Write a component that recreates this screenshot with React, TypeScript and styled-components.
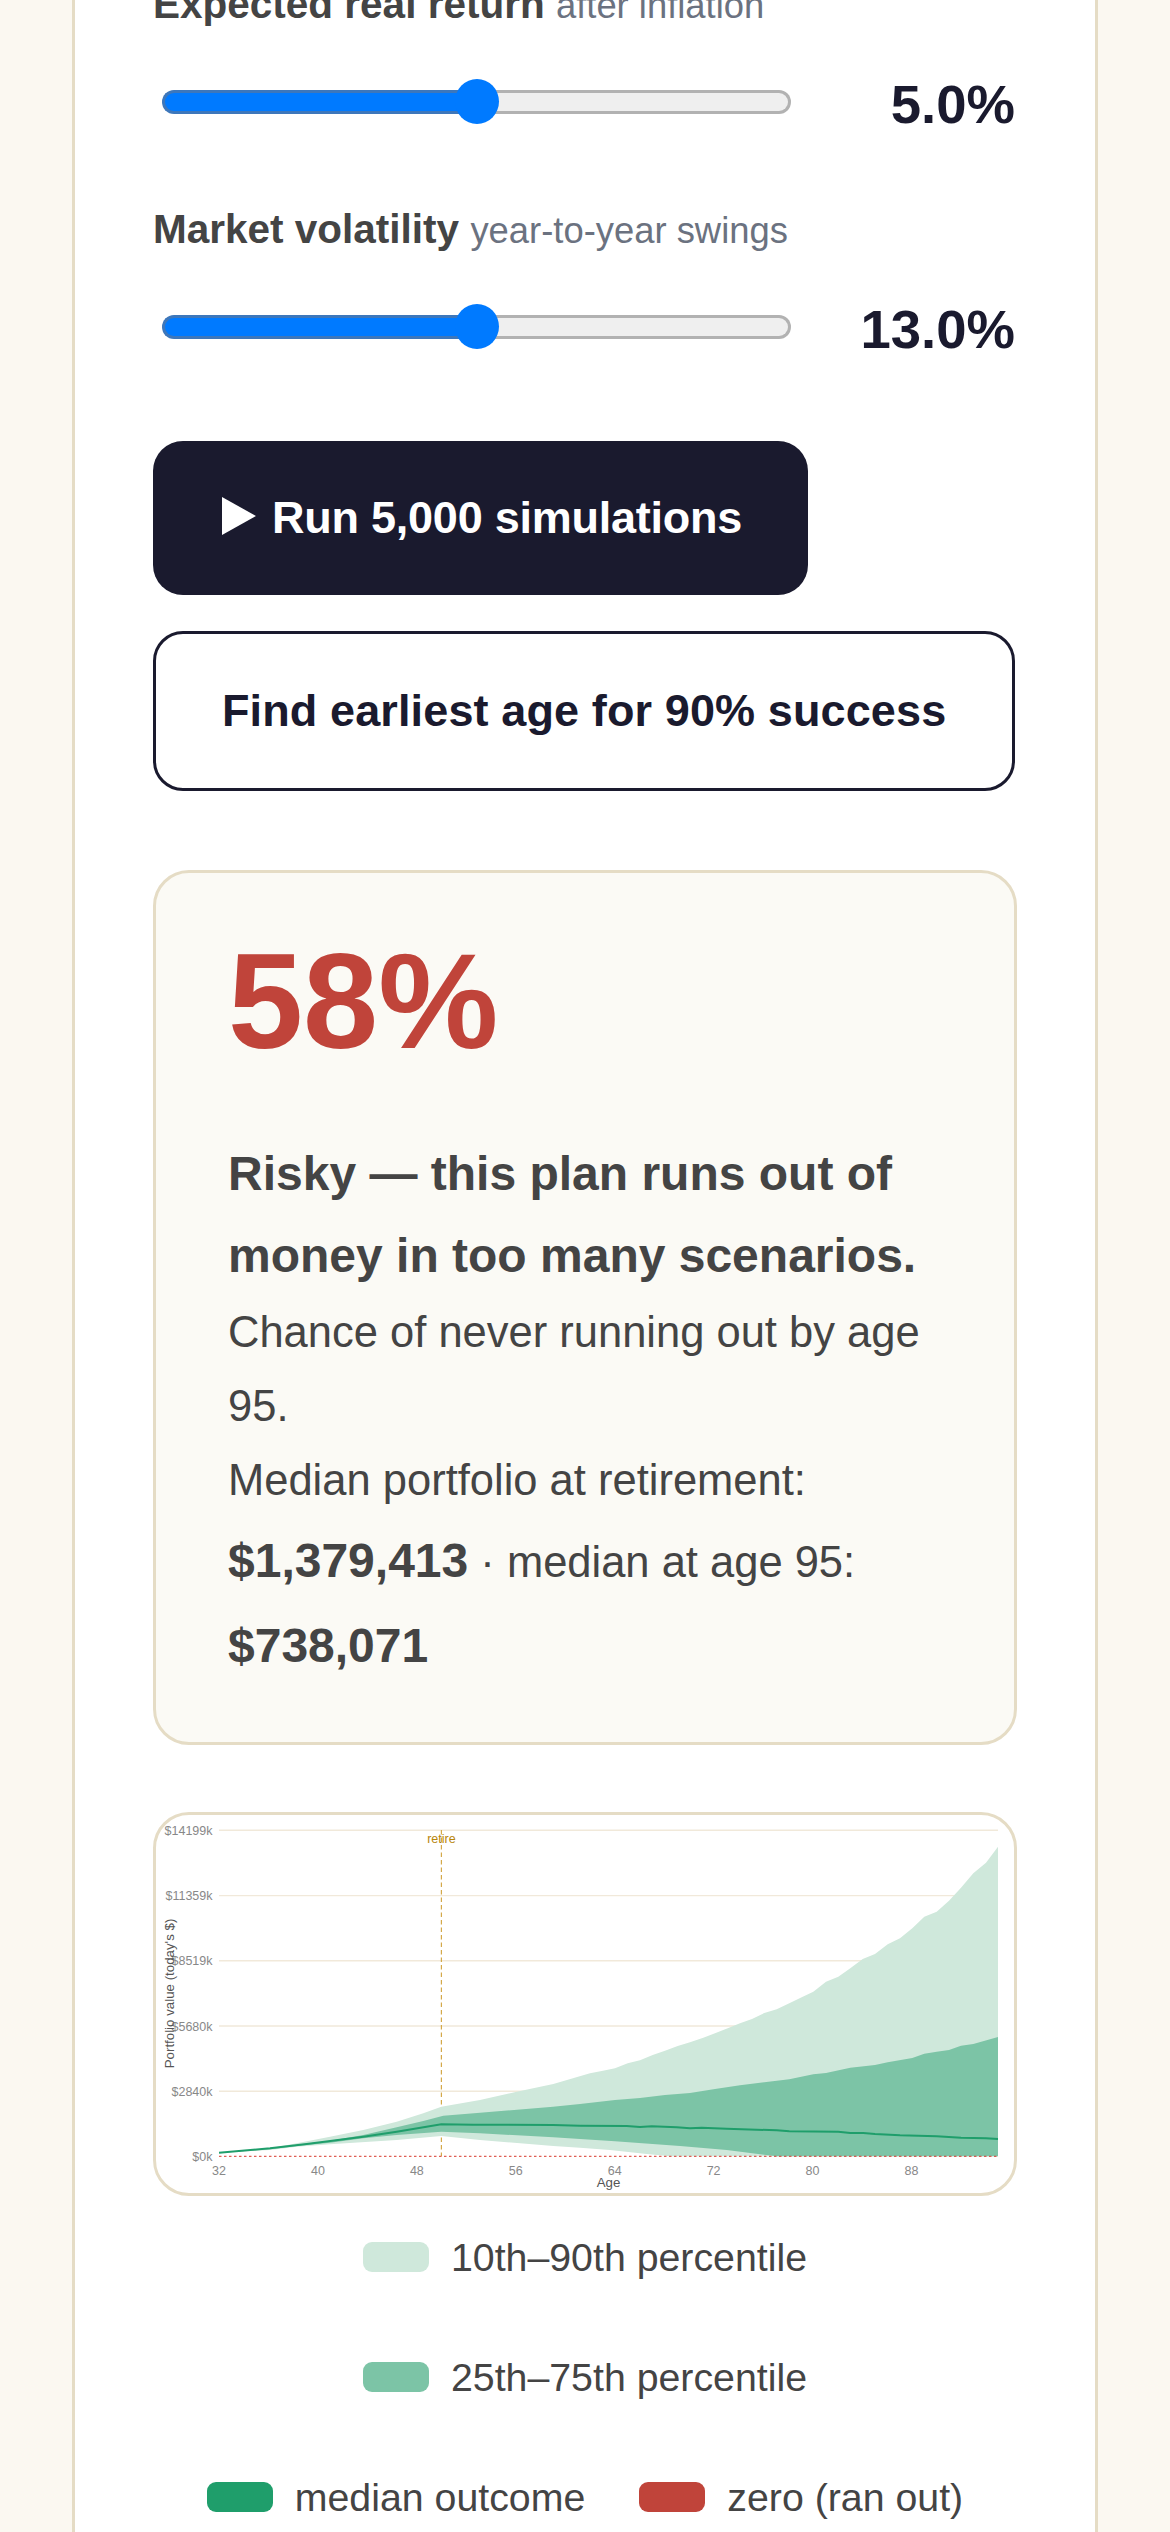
import React from "react";
import styled, { createGlobalStyle } from "styled-components";

const GlobalStyle = createGlobalStyle`
  html, body {
    margin: 0;
    padding: 0;
    height: 2532px;
    overflow: hidden;
    background: #fbf8f1;
    font-family: "Liberation Sans", Arial, sans-serif;
  }
`;

const Panel = styled.main`
  box-sizing: border-box;
  width: 1026px;
  min-height: 2700px;
  margin: -100px 0 0 72px;
  padding: 71px 78px 0;
  background: #fff;
  border: 3px solid #e5dcc5;
`;

const Field = styled.section`
  margin-bottom: 55px;
`;

const FieldLabel = styled.div`
  font-size: 40.5px;
  line-height: 60px;
  font-weight: 700;
  color: #444;
`;

const Hint = styled.span`
  font-size: 36.4px;
  line-height: 1;
  font-weight: 400;
  color: #6b7280;
`;

const ControlRow = styled.div`
  display: flex;
  align-items: center;
  justify-content: space-between;
  height: 84px;
  margin-top: 26px;
  padding: 0 2px 0 9px;
`;

const Slider = styled.div`
  position: relative;
  display: flex;
  width: 629px;
  height: 24px;
`;

const SliderFill = styled.div`
  box-sizing: border-box;
  width: 50%;
  background: #007aff;
  border: 3px solid #3d77bb;
  border-right: 0;
  border-radius: 12px 0 0 12px;
`;

const SliderRest = styled.div`
  box-sizing: border-box;
  flex: 1;
  background: #efefef;
  border: 3px solid #b2b2b2;
  border-left: 0;
  border-radius: 0 12px 12px 0;
`;

const SliderThumb = styled.div`
  position: absolute;
  top: -11px;
  left: 293px;
  width: 44px;
  height: 45px;
  border-radius: 50%;
  background: #007aff;
`;

const FieldValue = styled.output`
  font-size: 54.5px;
  font-weight: 700;
  color: #1a1a2e;
  transform: translateY(2px);
`;

const Actions = styled.div`
  display: flex;
  flex-direction: column;
  align-items: flex-start;
  gap: 36px;
  margin-top: 72px;
`;

const ActionButton = styled.button<{ $outline?: boolean }>`
  display: inline-flex;
  align-items: center;
  gap: 16px;
  padding: 51px 66px;
  font-family: inherit;
  font-size: 45px;
  font-weight: 700;
  line-height: normal;
  letter-spacing: ${(props) => (props.$outline ? "0.12px" : "-0.24px")};
  color: ${(props) => (props.$outline ? "#1a1a2e" : "#fff")};
  background: ${(props) => (props.$outline ? "#fff" : "#1a1a2e")};
  border: ${(props) => (props.$outline ? "3px solid #1a1a2e" : "0")};
  border-radius: 30px;
`;

const PlayIcon = styled.svg`
  width: 34px;
  height: 38px;
  margin: -4px 0 0 3px;
  fill: #fff;
`;

const ResultCard = styled.section`
  box-sizing: border-box;
  height: 875px;
  margin-top: 79px;
  padding: 0 72px;
  background: #fbfaf5;
  border: 3px solid #e5dcc5;
  border-radius: 36px;
`;

const Score = styled.div`
  margin-top: 51px;
  font-size: 135px;
  line-height: 155px;
  font-weight: 700;
  color: #c0443a;
`;

const Summary = styled.p`
  margin: 54px 0 0;
  font-size: 43.5px;
  line-height: 1.7;
  color: #444;

  strong {
    font-size: 48px;
  }
`;

const Money = styled.strong`
  line-height: 85px;
`;

const ChartCard = styled.section`
  box-sizing: border-box;
  height: 384px;
  margin-top: 67px;
  background: #fff;
  border: 3px solid #e5dcc5;
  border-radius: 36px;
  overflow: hidden;
`;

const ChartSvg = styled.svg`
  display: block;
  width: 858px;
  height: 378px;
  font-family: "Liberation Sans", Arial, sans-serif;
`;

const Legend = styled.ul`
  display: flex;
  flex-wrap: wrap;
  justify-content: center;
  gap: 54px;
  margin: 28px 0 0;
  padding: 0;
  list-style: none;
`;

const LegendItem = styled.li`
  display: flex;
  align-items: center;
  gap: 22px;
  font-size: 39.3px;
  line-height: 66px;
  color: #444;
`;

const Swatch = styled.span<{ $color: string }>`
  width: 66px;
  height: 30px;
  border-radius: 9px;
  background: ${(props) => props.$color};
`;

type Pt = [number, number];

const baseline = 2156.3;
const gridValues = [
  { label: "$14199k", y: 1830.3 },
  { label: "$11359k", y: 1895.6 },
  { label: "$8519k", y: 1960.8 },
  { label: "$5680k", y: 2026 },
  { label: "$2840k", y: 2091.2 },
  { label: "$0k", y: baseline },
];
const ages = [32, 40, 48, 56, 64, 72, 80, 88];
const ageX = (age: number) => 219 + (age - 32) * 12.365;

// traced from the fan chart, in page pixels
const p90: Pt[] = [
  [219, 2152.7], [270, 2148.3], [296.7, 2143.3], [330, 2136.7], [363.3, 2130], [396.7, 2121.7],
  [423.3, 2113.3], [441.3, 2106.7], [480, 2100], [516.7, 2091.7], [553.3, 2084], [590, 2073.3],
  [601.7, 2071], [615, 2068.3], [627.7, 2063.3], [640, 2060.3], [652.7, 2055], [665, 2050.7],
  [677.7, 2046], [690, 2042.3], [703.3, 2037.7], [715, 2033.3], [727.7, 2028.3], [740, 2023.3],
  [752, 2019], [764.3, 2013], [776.7, 2009.3], [789.3, 2003.3], [801.7, 1997.3], [813.3, 1991.7],
  [826, 1981.7], [838.3, 1976.7], [850.3, 1968.3], [862.7, 1959], [875, 1954], [887.7, 1944.3],
  [900, 1938.3], [912.3, 1928.3], [924.3, 1916.7], [936.7, 1911.7], [949, 1900.7], [961, 1887.7],
  [973.3, 1873.3], [986, 1862.7], [998, 1846.7],
];
const p75: Pt[] = [
  [219, 2152.7], [270, 2148.7], [296.7, 2144.7], [330, 2140.7], [363.3, 2135], [396.7, 2127.3],
  [423.3, 2121], [443.3, 2115.7], [480, 2112.7], [553, 2106.7], [580, 2104], [615, 2100],
  [640, 2098], [665, 2095], [690, 2093], [715, 2089], [740, 2085.3], [764.3, 2082.3],
  [789.3, 2079.3], [813.3, 2074.3], [826, 2073], [850.3, 2067.7], [875, 2065], [887.7, 2062.3],
  [912.3, 2058], [924.3, 2053.7], [936.7, 2051.7], [949, 2050], [961, 2045.7], [973.3, 2044],
  [998, 2037],
];
const p25: Pt[] = [
  [219, 2152.7], [270, 2149.3], [296.7, 2146], [330, 2142.7], [363.3, 2138.3], [396.7, 2135],
  [441.3, 2131.7], [480, 2133.3], [553.3, 2137.3], [580, 2139], [615, 2141.3], [680, 2146],
  [726.7, 2150], [776.7, baseline], [998, baseline],
];
const p10: Pt[] = [
  [219, 2152.7], [270, 2150], [296.7, 2146.7], [330, 2144.3], [396.7, 2140], [441.3, 2136],
  [480, 2140], [553.3, 2146], [580, 2147.7], [610, 2150], [646.7, 2154], [670, baseline],
  [998, baseline],
];
const median: Pt[] = [
  [219, 2152.7], [270, 2148.3], [306.7, 2144], [363.3, 2136.7], [396.7, 2131.7], [441.3, 2124.3],
  [473, 2124.7], [553, 2125], [580, 2125.7], [626.7, 2126], [640, 2127], [651.7, 2126.3],
  [676.7, 2127.3], [690, 2128.3], [701.7, 2127.7], [726.7, 2128.7], [776.7, 2130.3], [789.3, 2131.3],
  [838.3, 2131.7], [850.3, 2133], [863.3, 2133], [875, 2134], [900, 2135.3], [936.7, 2136.3],
  [961, 2137.7], [986, 2138.3], [998, 2139],
];

const toPoints = (pts: Pt[]) => pts.map((p) => p.join(",")).join(" ");
const band = (upper: Pt[], lower: Pt[]) => toPoints([...upper, ...[...lower].reverse()]);

const colors = {
  outer: "#cfe8db",
  inner: "#7cc4a6",
  median: "#1f9e6b",
  zero: "#c0443a",
};

const FanChart = () => (
  <ChartSvg viewBox="156 1815 858 378">
    {gridValues.map((g) => (
      <g key={g.label}>
        {g.y !== baseline && <line x1={219} x2={998} y1={g.y} y2={g.y} stroke="#f1e9da" strokeWidth={1.4} />}
        <text x={212.5} y={g.y + 4.5} textAnchor="end" fontSize={12.5} fill="#888">
          {g.label}
        </text>
      </g>
    ))}
    <line x1={441.4} x2={441.4} y1={1830} y2={baseline} stroke="#d4a94a" strokeWidth={1.2} strokeDasharray="4.5 3" />
    <polygon points={band(p90, p10)} fill={colors.outer} />
    <polygon points={band(p75, p25)} fill={colors.inner} />
    <polyline points={toPoints(median)} fill="none" stroke={colors.median} strokeWidth={2} />
    <line x1={219} x2={998} y1={baseline} y2={baseline} stroke="#d8392c" strokeWidth={1} strokeDasharray="2.5 2.5" />
    <text x={441.4} y={1842.6} textAnchor="middle" fontSize={12.5} fill="#b8860b">
      retire
    </text>
    {ages.map((age) => (
      <text key={age} x={ageX(age)} y={2174.5} textAnchor="middle" fontSize={12.5} fill="#888">
        {age}
      </text>
    ))}
    <text x={608.5} y={2187} textAnchor="middle" fontSize={13.3} fill="#555">
      Age
    </text>
    <text
      transform="translate(173.5 1993.5) rotate(-90)"
      textAnchor="middle"
      fontSize={13.3}
      fill="#555"
    >
      Portfolio value (today's $)
    </text>
  </ChartSvg>
);

const sliders = [
  { name: "Expected real return", hint: "after inflation", value: "5.0%" },
  { name: "Market volatility", hint: "year-to-year swings", value: "13.0%" },
];

const legendItems = [
  { label: "10th–90th percentile", color: colors.outer },
  { label: "25th–75th percentile", color: colors.inner },
  { label: "median outcome", color: colors.median },
  { label: "zero (ran out)", color: colors.zero },
];

const App = () => (
  <>
    <GlobalStyle />
    <Panel>
      {sliders.map((s) => (
        <Field key={s.name}>
          <FieldLabel>
            {s.name} <Hint>{s.hint}</Hint>
          </FieldLabel>
          <ControlRow>
            <Slider>
              <SliderFill />
              <SliderRest />
              <SliderThumb />
            </Slider>
            <FieldValue>{s.value}</FieldValue>
          </ControlRow>
        </Field>
      ))}
      <Actions>
        <ActionButton>
          <PlayIcon viewBox="0 0 34 38">
            <polygon points="0,0 34,19 0,38" />
          </PlayIcon>
          Run 5,000 simulations
        </ActionButton>
        <ActionButton $outline>Find earliest age for 90% success</ActionButton>
      </Actions>
      <ResultCard>
        <Score>58%</Score>
        <Summary>
          <strong>Risky — this plan runs out of money in too many scenarios.</strong>
          <br />
          Chance of never running out by age 95.
          <br />
          Median portfolio at retirement: <Money>$1,379,413</Money> · median at age 95: <Money>$738,071</Money>
        </Summary>
      </ResultCard>
      <ChartCard>
        <FanChart />
      </ChartCard>
      <Legend>
        {legendItems.map((item) => (
          <LegendItem key={item.label}>
            <Swatch $color={item.color} />
            {item.label}
          </LegendItem>
        ))}
      </Legend>
    </Panel>
  </>
);

export default App;
